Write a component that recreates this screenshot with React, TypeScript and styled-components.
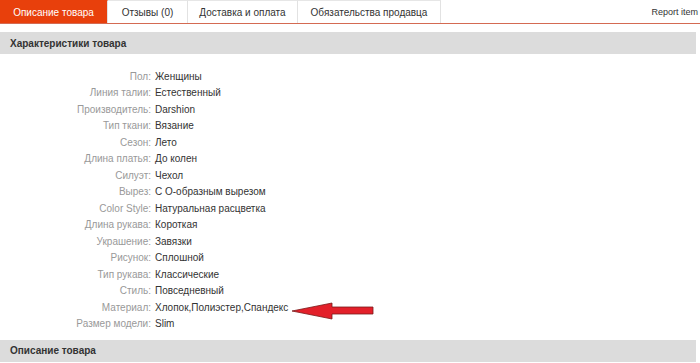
import React from "react";
import styled, { createGlobalStyle } from "styled-components";

const Global = createGlobalStyle`
  html, body { margin: 0; padding: 0; background: #fff; }
  body { font-family: "Liberation Sans", Arial, sans-serif; }
`;

const Page = styled.div`
  width: 700px;
  height: 363px;
  overflow: hidden;
  position: relative;
  background: #fff;
`;

const TabBar = styled.div`
  display: flex;
  align-items: stretch;
  height: 24px;
  border-bottom: 1px solid #d46a52;
  box-sizing: border-box;
`;

const Tab = styled.div<{ $active?: boolean; $w: number }>`
  width: ${(p) => p.$w}px;
  box-sizing: border-box;
  display: flex;
  align-items: center;
  justify-content: center;
  font-size: 10px;
  color: ${(p) => (p.$active ? "#fff" : "#333")};
  background: ${(p) => (p.$active ? "#e8400c" : "#fff")};
  border-top: 1px solid ${(p) => (p.$active ? "#e8400c" : "#e6e6e6")};
  border-right: 1px solid #e2e2e2;
`;

const Spacer = styled.div`
  flex: 1;
`;

const Report = styled.div`
  display: flex;
  align-items: center;
  padding-right: 2px;
  font-size: 9px;
  color: #333;
`;

const SectionHeader = styled.div<{ $top: number }>`
  margin: ${(p) => p.$top}px 4px 0 0;
  height: 22px;
  background: #dcdcdc;
  display: flex;
  align-items: center;
  padding-left: 10px;
  font-size: 10px;
  font-weight: bold;
  color: #333;
`;

const Specs = styled.div`
  display: grid;
  grid-template-columns: 151px 1fr;
  column-gap: 4px;
  padding-top: 15px;
  font-size: 10px;
  line-height: 16.47px;
`;

const Label = styled.div`
  text-align: right;
  color: #999;
`;

const Value = styled.div`
  color: #333;
`;

const Arrow = styled.svg`
  position: absolute;
  left: 288px;
  top: 300px;
`;

const specs: [string, string][] = [
  ["Пол:", "Женщины"],
  ["Линия талии:", "Естественный"],
  ["Производитель:", "Darshion"],
  ["Тип ткани:", "Вязание"],
  ["Сезон:", "Лето"],
  ["Длина платья:", "До колен"],
  ["Силуэт:", "Чехол"],
  ["Вырез:", "С О-образным вырезом"],
  ["Color Style:", "Натуральная расцветка"],
  ["Длина рукава:", "Короткая"],
  ["Украшение:", "Завязки"],
  ["Рисунок:", "Сплошной"],
  ["Тип рукава:", "Классические"],
  ["Стиль:", "Повседневный"],
  ["Материал:", "Хлопок,Полиэстер,Спандекс"],
  ["Размер модели:", "Slim"],
];

export default function App() {
  return (
    <Page>
      <Global />
      <TabBar>
        <Tab $active $w={108}>Описание товара</Tab>
        <Tab $w={80}>Отзывы (0)</Tab>
        <Tab $w={110}>Доставка и оплата</Tab>
        <Tab $w={143}>Обязательства продавца</Tab>
        <Spacer />
        <Report>Report item</Report>
      </TabBar>
      <SectionHeader $top={8}>Характеристики товара</SectionHeader>
      <Specs>
        {specs.map(([l, v]) => (
          <React.Fragment key={l}>
            <Label>{l}</Label>
            <Value>{v}</Value>
          </React.Fragment>
        ))}
      </Specs>
      <SectionHeader $top={7}>Описание товара</SectionHeader>
      <Arrow width="90" height="24" viewBox="0 0 90 24">
        <polygon
          points="4,11 44,3 44,7 85,7 85,14 44,14 44,19"
          fill="#e3202a"
          stroke="#7a1a1a"
          strokeWidth="0.8"
        />
      </Arrow>
    </Page>
  );
}
